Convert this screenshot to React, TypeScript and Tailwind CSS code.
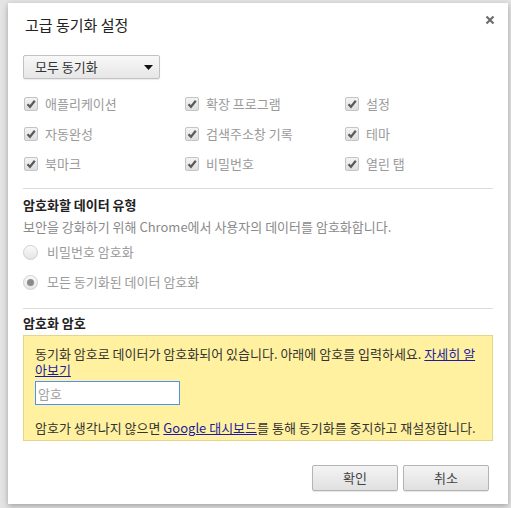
import React from "react";

const font = { fontFamily: '"Noto Sans CJK KR", "Noto Sans", sans-serif' };

const CheckItem: React.FC<{ label: string }> = ({ label }) => (
  <div className="flex items-center h-[30px]">
    <span className="w-[14px] h-[14px] rounded-[2px] border border-[#c4c4c4] bg-gradient-to-b from-[#f4f4f4] to-[#dedede] flex items-center justify-center">
      <svg width="10" height="10" viewBox="0 0 10 10">
        <path d="M1.5 5.2 L4 7.8 L8.8 1.8" fill="none" stroke="#5a5a5a" strokeWidth="2.2" />
      </svg>
    </span>
    <span className="ml-[7px] text-[13px] text-[#9a9a9a]">{label}</span>
  </div>
);

const RadioItem: React.FC<{ label: string; checked?: boolean }> = ({ label, checked }) => (
  <div className="flex items-center h-[30px]">
    <span className="w-[15px] h-[15px] rounded-full border border-[#cfcfcf] bg-gradient-to-b from-[#fafafa] to-[#e4e4e4] flex items-center justify-center">
      {checked && <span className="w-[7px] h-[7px] rounded-full bg-[#8a8a8a]" />}
    </span>
    <span className="ml-[9px] text-[13px] text-[#9a9a9a]">{label}</span>
  </div>
);

export default function App() {
  return (
    <div className="w-[511px] h-[508px] bg-[#e4e4e4] pl-[8px] pt-[3px] overflow-hidden" style={font}>
      <div className="relative w-[500px] h-[501px] bg-white shadow-[0_2px_6px_rgba(0,0,0,0.3)] pt-[12px] px-[15px] flex flex-col">
        <button className="absolute right-[13px] top-[12px] w-[10px] h-[10px]">
          <svg width="10" height="10" viewBox="0 0 10 10">
            <path d="M1.5 1.5 L8.5 8.5 M8.5 1.5 L1.5 8.5" stroke="#6e6e6e" strokeWidth="2.2" />
          </svg>
        </button>

        <h1 className="ml-[2px] text-[15px] leading-[20px] text-[#222]">고급 동기화 설정</h1>

        <div className="mt-[20px] w-[137px] h-[24px] rounded-[2px] border border-[#c2c2c2] bg-gradient-to-b from-[#f8f8f8] to-[#e6e6e6] flex items-center justify-between pl-[11px] pr-[6px] shadow-[0_1px_1px_rgba(0,0,0,0.08)]">
          <span className="text-[13px] text-[#333]">모두 동기화</span>
          <svg width="9" height="5" viewBox="0 0 9 5">
            <path d="M0 0 H9 L4.5 5 Z" fill="#111" />
          </svg>
        </div>

        <div className="mt-[10px] grid grid-cols-[161px_160px_1fr] pl-[1px]">
          <CheckItem label="애플리케이션" />
          <CheckItem label="확장 프로그램" />
          <CheckItem label="설정" />
          <CheckItem label="자동완성" />
          <CheckItem label="검색주소창 기록" />
          <CheckItem label="테마" />
          <CheckItem label="북마크" />
          <CheckItem label="비밀번호" />
          <CheckItem label="열린 탭" />
        </div>

        <div className="mt-[9px] h-px bg-[#dcdcdc]" />

        <h2 className="mt-[7px] text-[13px] leading-[17px] font-bold text-[#222]">암호화할 데이터 유형</h2>
        <p className="mt-[5px] text-[13px] leading-[17px] text-[#8a8a8a]">
          보안을 강화하기 위해 Chrome에서 사용자의 데이터를 암호화합니다.
        </p>
        <div className="mt-[2px]">
          <RadioItem label="비밀번호 암호화" />
          <RadioItem label="모든 동기화된 데이터 암호화" checked />
        </div>

        <div className="mt-[11px] h-px bg-[#dcdcdc]" />

        <h2 className="mt-[5px] text-[13px] leading-[17px] font-bold text-[#222]">암호화 암호</h2>

        <div className="mt-[4px] border border-[#e3d58c] bg-[#fff19f] pt-[10px] pb-[4px] px-[11px] text-[13px] leading-[16px] text-[#333]">
          <p>
            동기화 암호로 데이터가 암호화되어 있습니다. 아래에 암호를 입력하세요.{" "}
            <a href="#" className="underline text-[#1c1ca0]">자세히 알아보기</a>
          </p>
          <input
            className="mt-[3px] w-[145px] h-[24px] border border-[#4d90fe] bg-white px-[2px] text-[13px] outline-none placeholder:text-[#a0a0a0]"
            placeholder="암호"
            style={font}
          />
          <p className="mt-[15px]">
            암호가 생각나지 않으면 <a href="#" className="underline text-[#1c1ca0]">Google 대시보드</a>를 통해 동기화를 중지하고 재설정합니다.
          </p>
        </div>

        <div className="mt-auto mb-[13px] flex justify-end gap-[5px] pr-[4px]">
          <button className="w-[86px] h-[26px] rounded-[2px] border border-[#b4b4b4] bg-gradient-to-b from-[#f4f4f4] to-[#e0e0e0] text-[13px] text-[#444] shadow-[0_1px_1px_rgba(0,0,0,0.1)]" style={font}>
            확인
          </button>
          <button className="w-[86px] h-[26px] rounded-[2px] border border-[#b4b4b4] bg-gradient-to-b from-[#f4f4f4] to-[#e0e0e0] text-[13px] text-[#444] shadow-[0_1px_1px_rgba(0,0,0,0.1)]" style={font}>
            취소
          </button>
        </div>
      </div>
    </div>
  );
}
